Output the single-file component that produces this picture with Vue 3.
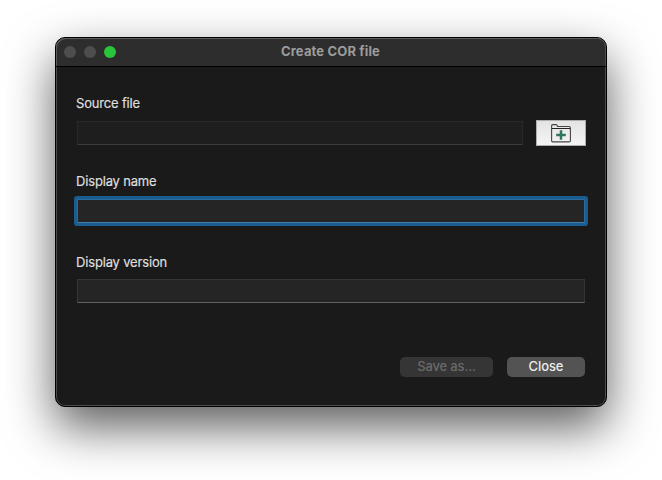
<script setup>
import { ref } from 'vue'

const source = ref('')
const name = ref('')
const version = ref('')
</script>

<template>
  <main class="desktop">
    <section class="window">
      <header class="titlebar">
        <div class="lights">
          <span class="light"></span>
          <span class="light"></span>
          <span class="light zoom"></span>
        </div>
        <h1 class="title">Create COR file</h1>
      </header>
      <form class="body" @submit.prevent>
        <label class="label" for="source">Source file</label>
        <div class="row">
          <input id="source" v-model="source" class="field readonly" readonly />
          <button type="button" class="browse">
            <svg width="20" height="19" viewBox="0 0 20 19" fill="none">
              <path d="M.6 16.5V2Q.6.6 2 .6H5Q6.200 .6 6.500 2.500H18Q19.400 2.500 19.400 3.900V16.500Q19.400 17.900 18 17.900H2Q.6 17.900 .6 16.500Z" stroke="#444" stroke-width="1.1" />
              <path d="M1 4.500H19" stroke="#222" />
              <path d="M10 6.200V15.800M5.200 11H14.800" stroke="#2e765c" stroke-width="2.500" />
            </svg>
          </button>
        </div>
        <label class="label second" for="name">Display name</label>
        <input id="name" v-model="name" class="field focused" />
        <label class="label third" for="version">Display version</label>
        <input id="version" v-model="version" class="field" />
        <footer class="actions">
          <button type="button" class="btn save" disabled>Save as...</button>
          <button type="button" class="btn close">Close</button>
        </footer>
      </form>
    </section>
  </main>
</template>

<style>
body {
  background: #fff;
  overflow: hidden;
}
</style>

<style scoped>
* {
  box-sizing: border-box;
}
.desktop {
  width: 662px;
  height: 480px;
  padding: 37px 55px;
  overflow: hidden;
  font-family: Inter, "Liberation Sans", sans-serif;
  font-size: 13px;
}
.window {
  width: 552px;
  height: 370px;
  border: 1px solid #000;
  border-radius: 10px;
  background: #1a1a1a;
  box-shadow: inset 0 0 0 1px #4c4c4c, 0 20px 48px rgba(0, 0, 0, 0.64);
}
.titlebar {
  display: grid;
  grid-template-columns: 60px 1fr 60px;
  align-items: center;
  height: 29px;
  padding: 0 9px 0 8px;
  background: #2d2d2d;
  border-bottom: 1px solid #000;
  border-radius: 9px 9px 0 0;
  box-shadow: inset 1px 1px 0 #5a5a5a, inset -1px 0 0 #4c4c4c;
}
.lights {
  display: flex;
  gap: 8px;
}
.light {
  width: 12px;
  height: 12px;
  border-radius: 50%;
  background: #4d4d4d;
}
.light.zoom {
  background: #28c43a;
}
.title {
  margin: 0 0 2px;
  text-align: center;
  font-size: 13px;
  line-height: 16px;
  font-weight: 700;
  letter-spacing: 0.15px;
  color: #9c9c9c;
}
.body {
  display: flex;
  flex-direction: column;
  padding: 27px 21px 0;
}
.label {
  height: 18px;
  margin-left: -1px;
  line-height: 18px;
  letter-spacing: -0.17px;
  color: #dedede;
  -webkit-text-stroke: 0.2px #dedede;
}
.second {
  margin-top: 26px;
}
.third {
  margin-top: 30px;
}
.row {
  display: flex;
  align-items: center;
  gap: 13px;
  margin: 8px -1px 0 0;
  height: 26px;
}
.field {
  display: block;
  width: 508px;
  height: 24px;
  margin: 8px 0 0;
  padding: 0 4px;
  border: 1px solid #363636;
  border-bottom-color: #606060;
  background: #252525;
  color: #dedede;
  font: inherit;
  outline: none;
}
.readonly {
  flex: 1;
  width: auto;
  min-width: 0;
  margin: 0;
  border-color: #282828;
  border-bottom-color: #3c3c3c;
  background: #1e1e1e;
}
.focused {
  margin-top: 9px;
  border-color: #2a6a9c;
  border-bottom-color: #3f7dad;
  border-radius: 1px;
  box-shadow: 0 0 0 3px #195d91;
}
.browse {
  display: flex;
  align-items: center;
  justify-content: center;
  width: 50px;
  height: 26px;
  padding: 0;
  border: 1px solid #adadad;
  background: linear-gradient(#e3e3e3, #f5f5f5);
}
.actions {
  display: flex;
  justify-content: flex-end;
  gap: 14px;
  margin-top: 54px;
}
.btn {
  height: 20px;
  padding: 0 0 2px;
  border: 0;
  border-radius: 5px;
  font: 500 13px/18px Inter, "Liberation Sans", sans-serif;
}
.save {
  width: 93px;
  background: #353535;
  color: #6a6a6a;
  letter-spacing: -0.15px;
}
.close {
  width: 78px;
  background: #535353;
  color: #ececec;
  letter-spacing: -0.1px;
}
</style>
